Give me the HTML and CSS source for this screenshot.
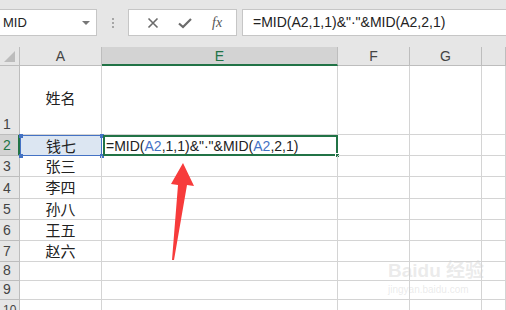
FILE: index.html
```html
<!DOCTYPE html>
<html>
<head>
<meta charset="utf-8">
<link rel="stylesheet" href="styles.css">
</head>
<body>
<div class="toolbar">
  <div class="namebox"><span class="name">MID</span><span class="caret"></span></div>
  <div class="dots"><i></i><i></i><i></i></div>
  <div class="btns">
    <svg class="ic" width="12" height="12" viewBox="0 0 12 12"><path d="M1.5 1.5 L10.5 10.5 M10.5 1.5 L1.5 10.5" stroke="#6b6b6b" stroke-width="1.6" fill="none"/></svg>
    <svg class="ic" width="14" height="12" viewBox="0 0 14 12"><path d="M1 6.5 L5 10 L13 2" stroke="#6b6b6b" stroke-width="2.2" fill="none"/></svg>
    <span class="fx">fx</span>
  </div>
  <div class="fbar">=MID(A2,1,1)&amp;"·"&amp;MID(A2,2,1)</div>
</div>
<div class="sheet">
  <div class="grid">
    <div class="corner"><span class="tri"></span></div>
    <div class="ch">A</div>
    <div class="ch sel">E</div>
    <div class="ch">F</div>
    <div class="ch">G</div>
    <div class="ch"></div>

    <div class="rh r1">1</div>
    <div class="c cn tall">姓名</div>
    <div class="c"></div><div class="c"></div><div class="c"></div><div class="c"></div>

    <div class="rh rsel">2</div>
    <div class="c cn ref">钱七<i class="h tl"></i><i class="h tr"></i><i class="h bl"></i><i class="h br"></i></div>
    <div class="c active"><span>=MID(<b>A2</b>,1,1)&amp;"·"&amp;MID(<b>A2</b>,2,1)</span><i class="fill"></i></div>
    <div class="c"></div><div class="c"></div><div class="c"></div>

    <div class="rh">3</div>
    <div class="c cn">张三</div>
    <div class="c"></div><div class="c"></div><div class="c"></div><div class="c"></div>

    <div class="rh">4</div>
    <div class="c cn">李四</div>
    <div class="c"></div><div class="c"></div><div class="c"></div><div class="c"></div>

    <div class="rh">5</div>
    <div class="c cn">孙八</div>
    <div class="c"></div><div class="c"></div><div class="c"></div><div class="c"></div>

    <div class="rh">6</div>
    <div class="c cn">王五</div>
    <div class="c"></div><div class="c"></div><div class="c"></div><div class="c"></div>

    <div class="rh">7</div>
    <div class="c cn">赵六</div>
    <div class="c"></div><div class="c"></div><div class="c"></div><div class="c"></div>

    <div class="rh">8</div>
    <div class="c"></div><div class="c"></div><div class="c"></div><div class="c"></div><div class="c"></div>

    <div class="rh">9</div>
    <div class="c"></div><div class="c"></div><div class="c"></div><div class="c"></div><div class="c"></div>

    <div class="rh r10">10</div>
    <div class="c"></div><div class="c"></div><div class="c"></div><div class="c"></div><div class="c"></div>
  </div>
  <svg class="arrow" width="506" height="310" viewBox="0 0 506 310"><polygon points="183,163 194,186 187,185 174,260 172,260 178,185 171,184" fill="#f73b3b"/></svg>
  <div class="wm"><span class="wm1">Bai<span class="paw">du</span> 经验</span><span class="wm2">jingyan.baidu.com</span></div>
</div>
</body>
</html>
```
FILE: styles.css
```css
* { box-sizing: border-box; }
html, body { margin: 0; padding: 0; }
body {
  width: 506px; height: 310px; overflow: hidden; background: #fff;
  font-family: "Liberation Sans", "Noto Sans CJK SC", sans-serif;
  color: #222;
}
.toolbar {
  height: 47px; background: #e6e6e6;
  display: flex; align-items: flex-start; padding-top: 9px;
}
.namebox {
  width: 97px; height: 27px; background: #fff;
  border: 1px solid #c6c6c6; border-left: none;
  display: flex; align-items: center; justify-content: space-between;
  padding: 0 6px 0 3px;
}
.name { font-size: 13px; color: #222; }
.caret {
  width: 0; height: 0; border-left: 4px solid transparent; border-right: 4px solid transparent;
  border-top: 4px solid #777;
}
.dots {
  width: 31px; height: 27px; display: flex; flex-direction: column; align-items: center; justify-content: center; gap: 2px;
}
.dots i { width: 2px; height: 2px; background: #a6a6a6; display: block; }
.btns {
  width: 109px; height: 27px; background: #fff; border: 1px solid #c6c6c6;
  display: flex; align-items: center; justify-content: space-around; padding: 0 4px 0 8px;
}
.fx { font-family: "Liberation Serif", serif; font-style: italic; font-size: 14px; color: #555; }
.fbar {
  margin-left: 5px; flex: 1; height: 27px; background: #fff; border: 1px solid #c6c6c6; border-right: none;
  font-size: 14px; line-height: 25px; padding-left: 10px; color: #222; white-space: nowrap;
}
.sheet { position: relative; }
.grid {
  display: grid;
  grid-template-columns: 20px 82px 236px 72px 72px 24px;
  grid-template-rows: 19px 69px 21px 21px 22px 21px 21px 21px 19px 19px 19px;
}
.corner, .ch, .rh {
  background: #e6e6e6; border-right: 1px solid #bdbdbd; border-bottom: 1px solid #bdbdbd;
  color: #444;
}
.corner { position: relative; }
.tri {
  position: absolute; right: 4px; bottom: 3px; width: 0; height: 0;
  border-left: 11px solid transparent; border-bottom: 11px solid #bcbcbc;
}
.ch { font-size: 14px; text-align: center; line-height: 19px; }
.ch.sel { background: #d3d3d3; border-bottom: 2px solid #217346; color: #217346; }
.rh { font-size: 14px; padding-left: 3px; line-height: 20px; display: flex; align-items: flex-end; }
.rh.r10 { font-size: 12px; align-items: flex-start; }
.rh.rsel { background: #d3d3d3; border-right: 2px solid #217346; color: #217346; }
.c { border-right: 1px solid #d4d4d4; border-bottom: 1px solid #d4d4d4; font-size: 15px; position: relative; }
.cn { text-align: center; line-height: 20px; font-family: "Noto Sans CJK SC", sans-serif; font-size: 15px; color: #222; }
.tall { display: flex; align-items: center; justify-content: center; padding-bottom: 4px; }
.ref { background: #dce6f2; border: 1px solid #4472c4; }
.h { position: absolute; width: 4px; height: 4px; background: #4472c4; }
.h.tl { left: -2px; top: -2px; }
.h.tr { right: -3px; top: -2px; }
.h.bl { left: -2px; bottom: -3px; }
.h.br { right: -3px; bottom: -3px; }
.active { border: 2px solid #217346; margin-left: 1px; }
.active span {
  position: absolute; left: 1px; top: 0; line-height: 18px; font-size: 14px; white-space: nowrap; color: #222;
}
.active b { font-weight: normal; color: #4472c4; }
.fill { position: absolute; right: -4px; bottom: -4px; width: 5px; height: 5px; background: #217346; border: 1px solid #fff; }
.arrow { position: absolute; left: 0; top: -47px; pointer-events: none; }
.wm {
  position: absolute; left: 388px; top: 208px; display: flex; flex-direction: column; color: rgba(210,210,210,0.45);
}
.wm1 { font-size: 19px; font-weight: bold; letter-spacing: 0; }
.wm2 { font-size: 10px; margin-top: 2px; }
```
